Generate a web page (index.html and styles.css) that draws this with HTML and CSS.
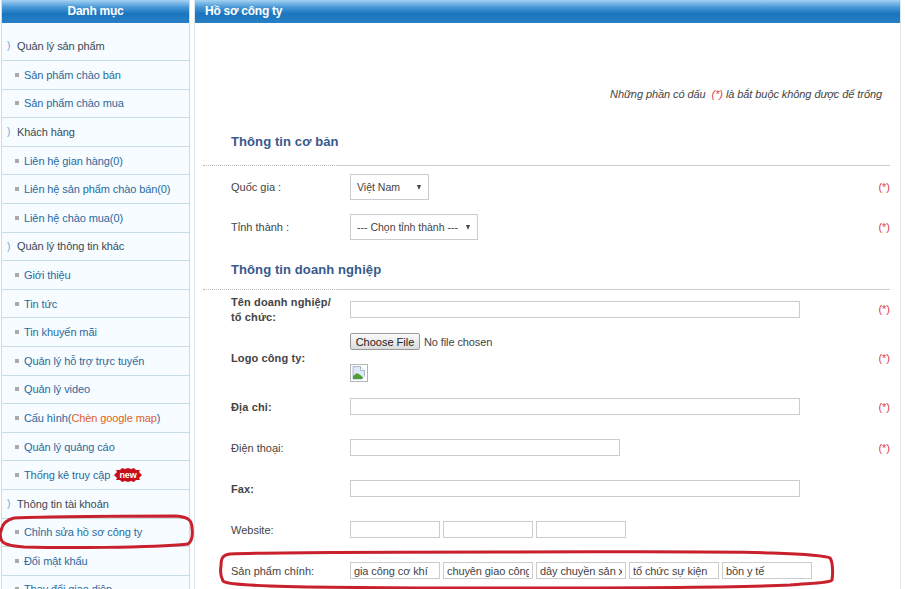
FILE: index.html
```html
<!DOCTYPE html>
<html lang="vi">
  <head>
    <meta charset="UTF-8" />
    <meta name="viewport" content="width=device-width, initial-scale=1.0" />
    <title>Hồ sơ công ty</title>
    <link rel="stylesheet" href="styles.css">
  </head>
  <body>
    <div class="page">
      <aside class="sidebar">
        <h2 class="panel-head panel-head-center">Danh mục</h2>
        <ul class="menu">
          <li class="menu-group menu-first">Quản lý sản phẩm</li>
          <li class="menu-item"><a href="#">Sản phẩm chào bán</a></li>
          <li class="menu-item"><a href="#">Sản phẩm chào mua</a></li>
          <li class="menu-group">Khách hàng</li>
          <li class="menu-item"><a href="#">Liên hệ gian hàng(0)</a></li>
          <li class="menu-item"><a href="#">Liên hệ sản phẩm chào bán(0)</a></li>
          <li class="menu-item"><a href="#">Liên hệ chào mua(0)</a></li>
          <li class="menu-group">Quản lý thông tin khác</li>
          <li class="menu-item"><a href="#">Giới thiệu</a></li>
          <li class="menu-item"><a href="#">Tin tức</a></li>
          <li class="menu-item"><a href="#">Tin khuyến mãi</a></li>
          <li class="menu-item"><a href="#">Quản lý hỗ trợ trực tuyến</a></li>
          <li class="menu-item"><a href="#">Quản lý video</a></li>
          <li class="menu-item"><a href="#">Cấu hình(<span class="orange">Chèn google map</span>)</a></li>
          <li class="menu-item"><a href="#">Quản lý quảng cáo</a></li>
          <li class="menu-item">
            <a href="#">Thống kê truy cập</a>
            <svg class="new-badge" width="28" height="14" viewBox="0 0 28 14">
              <polygon fill="#c8101c" points="0,7 3,4 2,2 6,2 8,0 11,1 14,0 17,1 20,0 22,2 26,2 25,4 28,7 25,10 26,12 22,12 20,14 17,13 14,14 11,13 8,14 6,12 2,12 3,10" />
              <text x="14" y="10" text-anchor="middle" class="new-text">new</text>
            </svg>
          </li>
          <li class="menu-group">Thông tin tài khoản</li>
          <li class="menu-item"><a href="#">Chỉnh sửa hồ sơ công ty</a></li>
          <li class="menu-item"><a href="#">Đổi mật khẩu</a></li>
          <li class="menu-item"><a href="#">Thay đổi giao diện</a></li>
        </ul>
      </aside>

      <main class="content">
        <h2 class="panel-head">Hồ sơ công ty</h2>
        <p class="note">Những phần có dấu &nbsp;<span class="req">(*)</span> là bắt buộc không được để trống</p>

        <h3 class="section-title section-title-first">Thông tin cơ bản</h3>
        <div class="rule"><span class="rule-dots"></span><span class="rule-line"></span></div>

        <div class="row row-select">
          <label class="row-label">Quốc gia :</label>
          <div class="row-field">
            <span class="pick-wrap"><select class="pick pick-country"><option>Việt Nam</option></select></span>
          </div>
          <span class="req">(*)</span>
        </div>
        <div class="row row-select">
          <label class="row-label">Tỉnh thành :</label>
          <div class="row-field">
            <span class="pick-wrap"><select class="pick pick-city"><option>--- Chọn tỉnh thành ---</option></select></span>
          </div>
          <span class="req">(*)</span>
        </div>

        <h3 class="section-title section-title-second">Thông tin doanh nghiệp</h3>
        <div class="rule"><span class="rule-dots"></span><span class="rule-line"></span></div>

        <div class="row row-name">
          <label class="row-label row-label-bold">Tên doanh nghiệp/<br />tổ chức:</label>
          <div class="row-field"><input class="box box-long" type="text" /></div>
          <span class="req">(*)</span>
        </div>
        <div class="row row-logo">
          <label class="row-label row-label-bold">Logo công ty:</label>
          <div class="row-field logo-field">
            <input class="file" type="file" />
            <svg class="broken-img" width="18" height="18" viewBox="0 0 18 18">
              <rect x="0.5" y="0.5" width="17" height="17" fill="#fff" stroke="#b5b5b5" />
              <path d="M3 2.5h7.5l4 4v8.5H3z" fill="#dfe8f8" stroke="#9aa9c4" stroke-width="0.8" />
              <path d="M10.5 2.5v4h4" fill="#fff" stroke="#9aa9c4" stroke-width="0.8" />
              <path d="M3 15v-3l4-3 4 2.5 3.5 3.5H3z" fill="#4f9d3a" />
              <path d="M11 16l6-6v7h-6z" fill="#fff" />
            </svg>
          </div>
          <span class="req">(*)</span>
        </div>
        <div class="row">
          <label class="row-label row-label-bold">Địa chỉ:</label>
          <div class="row-field"><input class="box box-long" type="text" /></div>
          <span class="req">(*)</span>
        </div>
        <div class="row">
          <label class="row-label">Điện thoại:</label>
          <div class="row-field"><input class="box box-mid" type="text" /></div>
          <span class="req">(*)</span>
        </div>
        <div class="row">
          <label class="row-label row-label-bold">Fax:</label>
          <div class="row-field"><input class="box box-long" type="text" /></div>
        </div>
        <div class="row">
          <label class="row-label">Website:</label>
          <div class="row-field">
            <input class="box box-short" type="text" />
            <input class="box box-short" type="text" />
            <input class="box box-short" type="text" />
          </div>
        </div>
        <div class="row">
          <label class="row-label">Sản phẩm chính:</label>
          <div class="row-field">
            <input class="box box-short" type="text" value="gia công cơ khí" />
            <input class="box box-short" type="text" value="chuyên giao công nghệ" />
            <input class="box box-short" type="text" value="dây chuyền sản xuất" />
            <input class="box box-short" type="text" value="tổ chức sự kiện" />
            <input class="box box-short" type="text" value="bồn y tế" />
          </div>
        </div>
      </main>

      <!-- red marks drawn on top of the screenshot -->
      <svg class="marks" width="905" height="589" viewBox="0 0 905 589">
        <path d="M1 531C2 524 6 520 14 518C60 516 130 516 176 516C188 517 192 520 192 528C193 535 192 541 188 544C150 548 60 548 24 547C10 546 2 544 1 539C0 536 0 533 1 531Z" />
        <path d="M221 566C221 559 222 555 230 554C280 552 400 552 500 552C620 552 720 551 772 553C800 554 825 555 830 558C833 562 833 574 832 580C829 583 815 583 790 585C750 587 620 588 500 588C400 588 300 587 270 586C245 585 226 584 223 581C221 577 220 571 221 566Z" />
      </svg>
    </div>
  </body>
</html>
```

FILE: styles.css
```css
* {
  box-sizing: border-box;
  padding: 0;
  margin: 0;
}
html,
body {
  height: 589px;
  overflow: hidden;
  background-color: white;
}
body {
  font-family: "Liberation Sans", Arial, sans-serif;
  font-size: 11px;
  color: #444;
}
a {
  color: #2a6a9e;
  text-decoration: none;
}
ul {
  list-style: none;
}
.page {
  position: relative;
  display: flex;
  width: 901px;
  height: 589px;
  padding-left: 1px;
  gap: 4px;
}
.panel-head {
  height: 23px;
  padding-left: 10px;
  font-size: 12px;
  line-height: 23px;
  letter-spacing: -0.25px;
  color: white;
  background: linear-gradient(#a5d3f2 0%, #4a9ad8 30%, #1a74bd 60%, #2a80c6 100%);
}
.panel-head-center {
  padding-left: 0;
  text-align: center;
}

/* sidebar */
.sidebar {
  flex: 0 0 189px;
  background-color: #f6fcff;
  border-left: 1px solid #c8dde8;
  border-right: 1px solid #c8dde8;
}
.menu-group,
.menu-item {
  display: flex;
  align-items: center;
  height: 28.6px;
  border-bottom: 1px solid #c8dde8;
  font-size: 11px;
  letter-spacing: -0.1px;
}
.menu-group {
  color: #3b4a55;
  padding-left: 5px;
}
.menu-group::before {
  content: ")";
  width: 10px;
  color: #6aa6d6;
  font-size: 10px;
}
.menu-first {
  height: 38px;
  padding-top: 8px;
}
.menu-item {
  padding-left: 13px;
}
.menu-item::before {
  content: "";
  width: 4px;
  height: 4px;
  margin-right: 5px;
  background-color: #aaa;
}
.orange {
  color: #e2601c;
}
.new-badge {
  margin-left: 4px;
}
.new-text {
  font-size: 9px;
  font-weight: bold;
  fill: white;
}

/* main panel */
.content {
  flex: 1;
  padding-bottom: 10px;
  border-left: 1px solid #dde6ec;
  border-right: 1px solid #dde6ec;
}
.note {
  height: 110px;
  padding-top: 65px;
  padding-right: 18px;
  font-style: italic;
  letter-spacing: -0.08px;
  text-align: right;
}
.req {
  color: #e0404a;
}
.section-title {
  margin-left: 36px;
  padding-bottom: 11px;
  font-size: 13px;
  line-height: 16px;
  color: #37598c;
  letter-spacing: 0.1px;
}
.section-title-first {
  margin-top: 1px;
  padding-bottom: 15px;
}
.section-title-second {
  margin-top: 16px;
}
.rule {
  display: flex;
  margin-left: 8px;
  margin-right: 10px;
  height: 1px;
}
.rule-dots {
  flex: 0 0 136px;
  border-top: 1px dotted #bbb;
}
.rule-line {
  flex: 1;
  border-top: 1px solid #ccc;
}
.row {
  display: flex;
  align-items: center;
  padding: 12px 10px 12px 36px;
}
.row-select {
  padding-top: 8px;
  padding-bottom: 6px;
}
.row-name {
  padding-top: 3px;
  padding-bottom: 3px;
}
.row-logo {
  padding-top: 5px;
  padding-bottom: 4px;
}
.row-label {
  flex: 0 0 119px;
  padding-top: 2px;
  line-height: 15px;
}
.row-select .row-label {
  padding-top: 0;
}
.row-label-bold {
  font-weight: bold;
  letter-spacing: 0.12px;
}
.row-field {
  flex: 1;
  display: flex;
  gap: 3px;
}
.logo-field {
  flex-direction: column;
  align-items: flex-start;
  gap: 14px;
}
.box {
  height: 17px;
  padding: 0 3px;
  border: 1px solid #ccc;
  font-family: inherit;
  font-size: 11px;
  letter-spacing: -0.1px;
  color: #444;
  background-color: white;
}
.box-long {
  width: 450px;
}
.box-mid {
  width: 270px;
}
.box-short {
  width: 90px;
}
.pick-wrap {
  position: relative;
  display: inline-block;
  height: 26px;
}
.pick-wrap::after {
  content: "";
  position: absolute;
  top: 11px;
  right: 8px;
  border-top: 5px solid #444;
  border-left: 2.5px solid transparent;
  border-right: 2.5px solid transparent;
}
.pick {
  display: block;
  height: 26px;
  padding-left: 6px;
  border: 1px solid #ccc;
  border-radius: 0;
  appearance: none;
  font-family: inherit;
  font-size: 10.5px;
  color: #444;
  background-color: white;
}
.pick-country {
  width: 79px;
}
.pick-city {
  width: 128px;
}
.file {
  height: 17px;
  font-family: inherit;
  font-size: 11px;
  letter-spacing: -0.1px;
  line-height: 15px;
}
.file::file-selector-button {
  width: 70px;
  height: 17px;
  margin-right: 4px;
  padding: 0;
  border: 1px solid #999;
  border-radius: 2px;
  font-family: inherit;
  font-size: 11px;
  color: #222;
  background: linear-gradient(#fafafa, #dcdcdc);
}
.marks {
  position: absolute;
  top: 0;
  left: 0;
  pointer-events: none;
}
.marks path {
  fill: none;
  stroke: #c8202c;
  stroke-width: 3;
}
```
